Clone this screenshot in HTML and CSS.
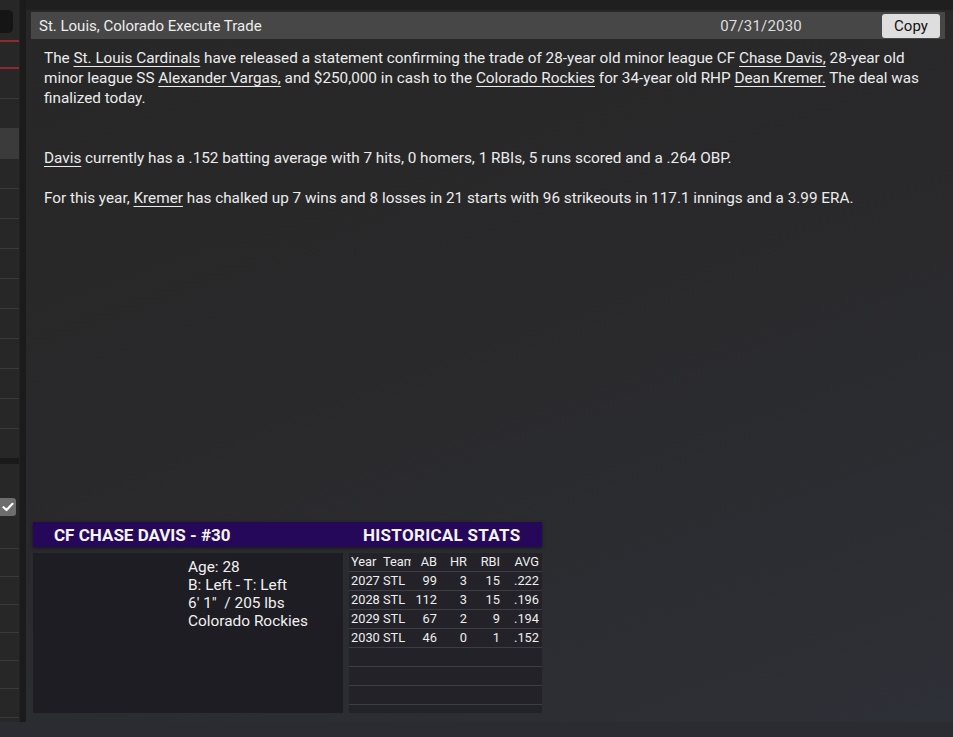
FILE: index.html
```html
<!DOCTYPE html>
<html>
<head>
<meta charset="utf-8">
<link rel="stylesheet" href="styles.css">
</head>
<body>
<div class="app">
  <aside class="sidebar">
    <div class="sb-search"></div>
    <div class="sb-red sb-red1"></div>
    <div class="sb-red sb-red2"></div>
    <div class="sb-row"></div>
    <div class="sb-row"></div>
    <div class="sb-row sb-active"></div>
    <div class="sb-row"></div>
    <div class="sb-row"></div>
    <div class="sb-row"></div>
    <div class="sb-row"></div>
    <div class="sb-row"></div>
    <div class="sb-row"></div>
    <div class="sb-row"></div>
    <div class="sb-row"></div>
    <div class="sb-row"></div>
    <div class="sb-row sb-last"></div>
    <div class="sb-band"></div>
    <div class="sb-check-area">
      <div class="sb-check">
        <svg width="12" height="10" viewBox="0 0 12 10"><path d="M1.5 5.2 L4.5 8 L10.5 1.8" fill="none" stroke="#fff" stroke-width="2.2" stroke-linecap="round" stroke-linejoin="round"/></svg>
      </div>
    </div>
    <div class="sb-row2"></div>
    <div class="sb-row2"></div>
    <div class="sb-row2"></div>
    <div class="sb-row2"></div>
    <div class="sb-row2"></div>
    <div class="sb-row2 sb-row2-last"></div>
  </aside>
  <div class="divider"></div>
  <main class="main">
    <div class="news">
      <div class="news-head">
        <span class="news-title">St. Louis, Colorado Execute Trade</span>
        <span class="news-date">07/31/2030</span>
        <button class="copy-btn">Copy</button>
      </div>
      <div class="news-body">
        <p>The <u>St. Louis Cardinals</u> have released a statement confirming the trade of 28-year old minor league CF <u>Chase Davis,</u> 28-year old minor league SS <u>Alexander Vargas,</u> and $250,000 in cash to the <u>Colorado Rockies</u> for 34-year old RHP <u>Dean Kremer.</u> The deal was finalized today.</p>
        <p class="gap-lg"><u>Davis</u> currently has a .152 batting average with 7 hits, 0 homers, 1 RBIs, 5 runs scored and a .264 OBP.</p>
        <p>For this year, <u>Kremer</u> has chalked up 7 wins and 8 losses in 21 starts with 96 strikeouts in 117.1 innings and a 3.99 ERA.</p>
      </div>
    </div>
    <section class="card">
      <div class="card-head">
        <span class="card-name">CF CHASE DAVIS - #30</span>
        <span class="card-hist">HISTORICAL STATS</span>
      </div>
      <div class="card-body">
        <div class="bio">
          <div>Age: 28</div>
          <div>B: Left - T: Left</div>
          <div>6' 1"&nbsp; / 205 lbs</div>
          <div>Colorado Rockies</div>
        </div>
        <div class="stats">
          <div class="srow shead"><span class="c-yr">Year</span><span class="c-tm">Team</span><span class="c-n c-ab">AB</span><span class="c-n c-hr">HR</span><span class="c-n c-rbi">RBI</span><span class="c-n c-avg">AVG</span></div>
          <div class="srow"><span class="c-yr">2027</span><span class="c-tm">STL</span><span class="c-n c-ab">99</span><span class="c-n c-hr">3</span><span class="c-n c-rbi">15</span><span class="c-n c-avg">.222</span></div>
          <div class="srow"><span class="c-yr">2028</span><span class="c-tm">STL</span><span class="c-n c-ab">112</span><span class="c-n c-hr">3</span><span class="c-n c-rbi">15</span><span class="c-n c-avg">.196</span></div>
          <div class="srow"><span class="c-yr">2029</span><span class="c-tm">STL</span><span class="c-n c-ab">67</span><span class="c-n c-hr">2</span><span class="c-n c-rbi">9</span><span class="c-n c-avg">.194</span></div>
          <div class="srow"><span class="c-yr">2030</span><span class="c-tm">STL</span><span class="c-n c-ab">46</span><span class="c-n c-hr">0</span><span class="c-n c-rbi">1</span><span class="c-n c-avg">.152</span></div>
          <div class="srow empty"></div>
          <div class="srow empty"></div>
          <div class="srow empty"></div>
        </div>
      </div>
    </section>
  </main>
</div>
<div class="footer"></div>
</body>
</html>
```
FILE: styles.css
```css
* { box-sizing: border-box; }
html, body { margin: 0; padding: 0; }
body {
  width: 953px;
  height: 737px;
  overflow: hidden;
  background: #1f1f1f;
  font-family: Roboto, "Noto Sans", sans-serif;
  color: #ececec;
}
.app {
  display: flex;
  height: 722px;
}
.sidebar {
  width: 19px;
  background: #272727;
  display: flex;
  flex-direction: column;
  padding-top: 10px;
}
.sb-search {
  height: 23px;
  width: 13px;
  background: #151515;
  border-radius: 0 5px 5px 0;
}
.sb-red {
  height: 2px;
  background: #8e2a2e;
}
.sb-red1 { margin-top: 7px; }
.sb-red2 { margin-top: 25px; }
.sb-row {
  height: 30px;
  border-bottom: 1px solid #3a3a3a;
}
.sb-active { background: #3b3b3b; }
.sb-last { height: 29px; border-bottom: none; }
.sb-band {
  height: 6px;
  background: #1a1a1a;
}
.sb-check-area {
  height: 85px;
  padding-top: 34px;
  border-bottom: 1px solid #3a3a3a;
}
.sb-check {
  width: 16px;
  height: 18px;
  background: #6d6d6d;
  border-radius: 0 3px 3px 0;
  display: flex;
  align-items: center;
  justify-content: center;
}
.sb-row2 {
  height: 28px;
  border-bottom: 1px solid #3a3a3a;
}
.sb-row2-last { height: 29px; }
.divider {
  width: 7px;
  background: #1b1b1b;
  border-left: 1px solid #222;
}
.main {
  flex: 1;
  background: linear-gradient(160deg, #272727 0%, #29292b 45%, #2e3037 100%);
  border-top: 10px solid #1f1f1f;
  padding: 2px 8px 0 5px;
  display: flex;
  flex-direction: column;
}
.news-head {
  height: 27px;
  background: #474747;
  display: flex;
  align-items: center;
  padding: 0 5px 0 8px;
  font-size: 15px;
  color: #ededed;
}
.news-title { flex: 1; }
.news-date { margin-right: 80px; color: #dedede; letter-spacing: 0.2px; }
.copy-btn {
  width: 58px;
  height: 24px;
  border: none;
  border-radius: 3px;
  background: #dedede;
  color: #111;
  font-family: Roboto, sans-serif;
  font-size: 15px;
  padding: 0;
}
.news-body {
  padding: 9px 20px 0 13px;
  font-size: 15.3px;
  line-height: 20px;
  color: #ececec;
}
.news-body p { margin: 0 0 20px 0; }
.news-body p.gap-lg { margin-top: 40px; }
.news-body u { text-underline-offset: 3px; text-decoration-thickness: 1px; }
.card {
  margin-top: auto;
  margin-bottom: 9px;
  margin-left: 2px;
  width: 509px;
}
.card-head {
  height: 25px;
  background: #26085a;
  display: flex;
  align-items: center;
  font-weight: bold;
  font-size: 17px;
  color: #f4f4f4;
  box-shadow: 0 1px 3px rgba(0,0,0,0.5);
}
.card-name { padding-left: 21px; width: 330px; }
.card-hist { letter-spacing: 0.3px; }
.card-body {
  display: flex;
  gap: 6px;
  margin-top: 6px;
  height: 160px;
}
.bio {
  width: 310px;
  background: #1e1d23;
  padding: 5px 0 0 155px;
  font-size: 15.4px;
  line-height: 18px;
  color: #f0f0f0;
}
.stats {
  width: 193px;
  background: #222228;
  font-size: 12.8px;
  color: #eeeeee;
}
.srow {
  display: flex;
  height: 19px;
  line-height: 18px;
  border-bottom: 1px solid #3d3d44;
}
.srow span { display: block; white-space: nowrap; overflow: hidden; }
.c-yr { width: 31px; padding-left: 2px; }
.c-tm { width: 31px; padding-left: 3px; }
.c-n { text-align: right; padding-right: 3px; }
.c-ab { width: 29px; }
.c-hr { width: 30px; }
.c-rbi { width: 33px; }
.c-avg { width: 39px; }
.footer {
  height: 15px;
  background: #2a2c32;
}
```
